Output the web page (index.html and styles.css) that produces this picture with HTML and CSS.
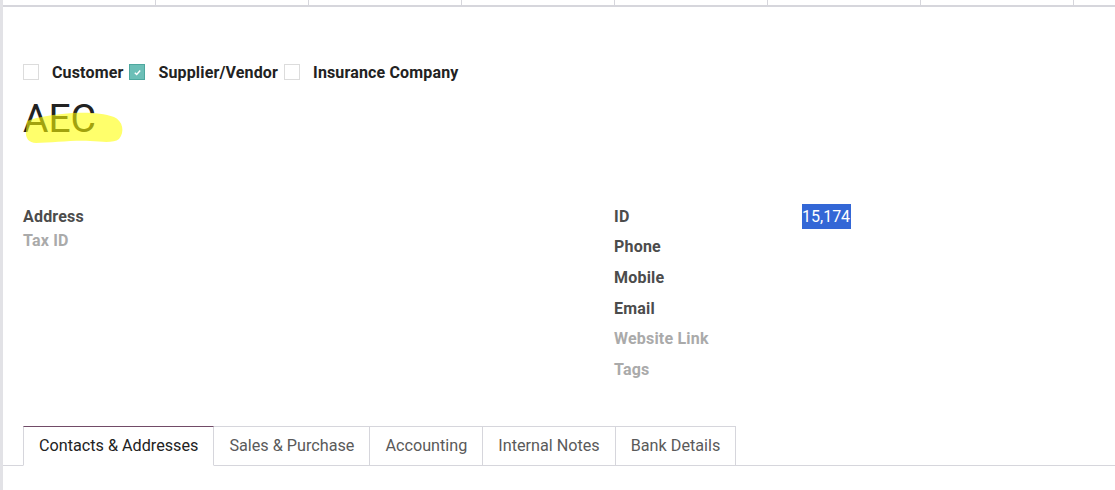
FILE: index.html
```html
<!DOCTYPE html>
<html lang="en">
<head>
  <meta charset="UTF-8" />
  <title>AEC</title>
  <link rel="stylesheet" href="styles.css">
</head>
<body>
  <div class="sheet">
    <div class="statusbar">
      <span></span><span></span><span></span><span></span><span></span><span></span><span></span><span></span>
    </div>

    <div class="content">
      <div class="roles">
        <span class="box"></span><label>Customer</label>
        <span class="box checked">
          <svg viewBox="0 0 10 10" width="9" height="9"><path d="M2 5.2 L4.1 7.2 L8 2.8" fill="none" stroke="#fff" stroke-width="1.6"/></svg>
        </span><label>Supplier/Vendor</label>
        <span class="box"></span><label>Insurance Company</label>
      </div>

      <div class="title">
        <h1>AEC</h1>
        <!-- marker scribble over the name -->
        <svg class="marker" viewBox="0 0 110 40" width="110" height="40">
          <path d="M7 13 C 18 9, 30 7, 42 6 C 60 4, 80 4, 94 9 C 103 13, 105 24, 99 31 C 94 35, 84 34, 70 33 C 52 32, 32 35, 16 35 C 9 35, 5 30, 6 23 Z" fill="#ffff00" fill-opacity="0.58"/>
        </svg>
      </div>

      <div class="fields">
        <div class="group left">
          <div class="row"><span class="label">Address</span></div>
          <div class="row"><span class="label muted">Tax ID</span></div>
        </div>
        <div class="group">
          <div class="row"><span class="label">ID</span><span class="value"><span class="sel">15,174</span></span></div>
          <div class="row"><span class="label">Phone</span></div>
          <div class="row"><span class="label">Mobile</span></div>
          <div class="row"><span class="label">Email</span></div>
          <div class="row"><span class="label muted">Website Link</span></div>
          <div class="row"><span class="label muted">Tags</span></div>
        </div>
      </div>
    </div>

    <ul class="tabs">
      <li class="active">Contacts &amp; Addresses</li>
      <li>Sales &amp; Purchase</li>
      <li>Accounting</li>
      <li>Internal Notes</li>
      <li>Bank Details</li>
    </ul>
  </div>
</body>
</html>
```

FILE: styles.css
```css
body {
  margin: 0;
  font-family: Roboto, 'Noto Sans', sans-serif;
  color: #222;
  background: #fff;
}
.sheet {
  height: 490px;
  border-left: 3px solid #e2e2e6;
  overflow: hidden;
}
.statusbar {
  display: grid;
  grid-template-columns: repeat(8, 153px);
  height: 5px;
  border-bottom: 2px solid #d6d6dc;
}
.statusbar span {
  border-right: 1px solid #d6d6dc;
}
.content {
  padding: 57px 20px 0;
}
.roles {
  display: flex;
  align-items: center;
  height: 16px;
  font-size: 16px;
  font-weight: bold;
  color: #222;
}
.box {
  width: 14px;
  height: 14px;
  border: 1px solid #dcdcdc;
  background: #fff;
  display: flex;
  align-items: center;
  justify-content: center;
}
.box.checked {
  background: #6cbfb7;
  border-color: #4ea89f;
}
.roles label {
  margin: 0 6px 0 13px;
  letter-spacing: 0.15px;
}
.title {
  position: relative;
  height: 60px;
  margin-top: 17px;
}
.title h1 {
  margin: 0;
  font-size: 39px;
  font-weight: normal;
  line-height: 44px;
  color: #222;
}
.marker {
  position: absolute;
  left: -3px;
  top: 11px;
}
.fields {
  display: grid;
  grid-template-columns: 591px 1fr;
  margin-top: 44px;
}
.row {
  display: flex;
  align-items: center;
  height: 30.6px;
  font-size: 16px;
  font-weight: bold;
  letter-spacing: 0.2px;
  color: #4c4c4c;
}
.group.left {
  padding-top: 3px;
}
.group.left .row {
  height: 24px;
}
.label {
  width: 188px;
}
.label.muted {
  color: #aaa;
}
.value {
  font-weight: normal;
  letter-spacing: 0;
}
.sel {
  background: #3367d6;
  color: #fff;
  padding: 3px 1px 3px 0;
}
.tabs {
  display: flex;
  list-style: none;
  margin: 41px 0 0;
  padding: 0 0 0 20px;
  border-bottom: 1px solid #d6d6dc;
}
.tabs li {
  padding: 9px 15px 10px;
  font-size: 16.2px;
  color: #5a5a5a;
  border: 1px solid #d6d6dc;
  border-left: none;
  margin-bottom: -1px;
}
.tabs li:first-child {
  border-left: 1px solid #d6d6dc;
}
.tabs li.active {
  color: #222;
  border-top-color: #714b67;
  border-bottom-color: #fff;
}
```
